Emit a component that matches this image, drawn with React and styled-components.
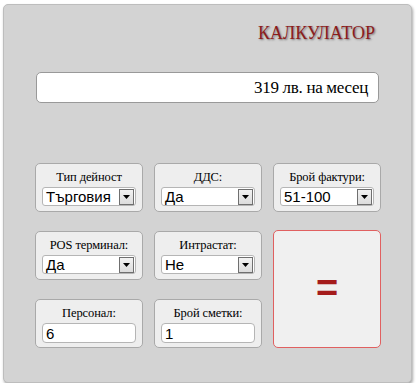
import React from 'react'
import styled, { createGlobalStyle } from 'styled-components'

const Global = createGlobalStyle`
  body {
    margin: 0;
    background: #fff;
    font-family: "Liberation Serif", "Times New Roman", serif;
  }
`;

const Panel = styled.div`
  margin: 4px 0 0 3px;
  width: 409px;
  height: 379px;
  box-sizing: border-box;
  background: #d3d3d3;
  border: 1px solid #bdbdbd;
  border-radius: 5px;
  box-shadow: 1px 2px 3px rgba(0, 0, 0, 0.35);
  padding: 0 28px 0 31px;
`;

const Title = styled.h1`
  margin: 0;
  padding: 18px 8px 0 0;
  height: 49px;
  box-sizing: border-box;
  text-align: right;
  font-family: "Liberation Serif", "Times New Roman", serif;
  font-size: 18px;
  font-weight: normal;
  color: #8c1c1c;
  text-shadow: 1px 1px 2px #777;
`;

const Result = styled.div`
  margin: 18px 4px 0 1px;
  height: 31px;
  box-sizing: border-box;
  background: #fff;
  border: 1px solid #999;
  border-radius: 5px;
  display: flex;
  align-items: center;
  justify-content: flex-end;
  padding: 0 10px 0 0;
  font-family: "Liberation Serif", "Times New Roman", serif;
  font-size: 17px;
  letter-spacing: -0.3px;
  color: #000;
`;

const Grid = styled.div`
  margin-top: 60px;
  display: grid;
  grid-template-columns: repeat(3, 108px);
  grid-auto-rows: 49px;
  column-gap: 11px;
  row-gap: 19px;
`;

const Card = styled.div`
  box-sizing: border-box;
  background: #eeeeee;
  border: 1px solid #a9a9a9;
  border-radius: 5px;
  display: flex;
  flex-direction: column;
  align-items: stretch;
  padding: 5px 6px 0 6px;
`;

const Label = styled.div`
  text-align: center;
  font-family: "Liberation Serif", "Times New Roman", serif;
  font-size: 12.5px;
  letter-spacing: -0.1px;
  line-height: 16px;
  height: 18px;
  color: #000;
`;

const SelectBox = styled.div`
  height: 19px;
  box-sizing: border-box;
  background: #fff;
  border: 1px solid #b5b5b5;
  border-radius: 3px;
  display: flex;
  align-items: center;
  justify-content: space-between;
  padding: 0 1px 0 3px;
  font-family: "Liberation Sans", Arial, sans-serif;
  font-size: 15px;
  color: #000;
`;

const ArrowBtn = styled.div`
  width: 15px;
  height: 16px;
  box-sizing: border-box;
  border: 1px solid #6f6f6f;
  background: linear-gradient(#f2f2f2, #dcdcdc);
  display: flex;
  align-items: center;
  justify-content: center;
`;

const Field = styled.div`
  height: 20px;
  box-sizing: border-box;
  background: #fff;
  border: 1px solid #b5b5b5;
  border-radius: 4px;
  display: flex;
  align-items: center;
  padding: 0 3px;
  font-family: "Liberation Sans", Arial, sans-serif;
  font-size: 15px;
  color: #000;
`;

const EqualsCard = styled.div`
  grid-column: 3;
  grid-row: 2 / span 2;
  margin-top: -1px;
  box-sizing: border-box;
  background: #f0f0f0;
  border: 1px solid #e06060;
  border-radius: 5px;
  display: flex;
  align-items: center;
  justify-content: center;
  font-family: "Liberation Sans", Arial, sans-serif;
  font-weight: bold;
  font-size: 38px;
  color: #a51c1c;
  padding-bottom: 1px;
`;

const Select = ({ label, value }) => (
  <Card>
    <Label>{label}</Label>
    <SelectBox>
      <span>{value}</span>
      <ArrowBtn>
        <svg width="7" height="4" viewBox="0 0 7 4">
          <path d="M0 0h7L3.5 4z" fill="#000" />
        </svg>
      </ArrowBtn>
    </SelectBox>
  </Card>
);

const Input = ({ label, value }) => (
  <Card>
    <Label>{label}</Label>
    <Field>{value}</Field>
  </Card>
);

const App = () => (
  <>
    <Global />
    <Panel>
      <Title>КАЛКУЛАТОР</Title>
      <Result>319 лв. на месец</Result>
      <Grid>
        <Select label="Тип дейност" value="Търговия" />
        <Select label="ДДС:" value="Да" />
        <Select label="Брой фактури:" value="51-100" />
        <Select label="POS терминал:" value="Да" />
        <Select label="Интрастат:" value="Не" />
        <EqualsCard>=</EqualsCard>
        <Input label="Персонал:" value="6" />
        <Input label="Брой сметки:" value="1" />
      </Grid>
    </Panel>
  </>
);

export default App;
